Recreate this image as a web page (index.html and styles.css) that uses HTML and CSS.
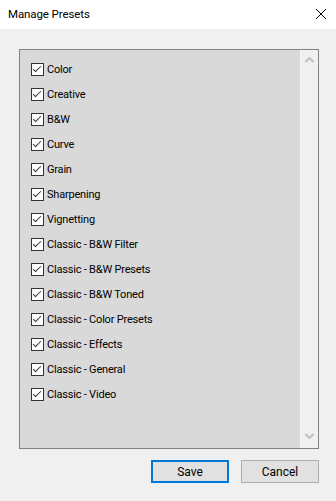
FILE: index.html
```html
<!DOCTYPE html>
<html lang="en">
<head>
    <meta charset="UTF-8">
    <meta name="viewport" content="width=device-width, initial-scale=1.0">
    <title>Manage Presets</title>
    <link rel="stylesheet" href="styles.css">
</head>
<body>
    <div class="dialog">
        <div class="title-bar">
            <div class="title-text">Manage Presets</div>
            <div class="close-button">
                <svg width="12" height="12" viewBox="0 0 12 12">
                    <path d="M1 1 L11 11 M11 1 L1 11" stroke="#000" stroke-width="1" fill="none"/>
                </svg>
            </div>
        </div>
        <div class="dialog-body">
            <div class="preset-box">
                <div class="preset-list">
                    <label class="preset-item"><span class="check-box"></span>Color</label>
                    <label class="preset-item"><span class="check-box"></span>Creative</label>
                    <label class="preset-item"><span class="check-box"></span>B&amp;W</label>
                    <label class="preset-item"><span class="check-box"></span>Curve</label>
                    <label class="preset-item"><span class="check-box"></span>Grain</label>
                    <label class="preset-item"><span class="check-box"></span>Sharpening</label>
                    <label class="preset-item"><span class="check-box"></span>Vignetting</label>
                    <label class="preset-item"><span class="check-box"></span>Classic - B&amp;W Filter</label>
                    <label class="preset-item"><span class="check-box"></span>Classic - B&amp;W Presets</label>
                    <label class="preset-item"><span class="check-box"></span>Classic - B&amp;W Toned</label>
                    <label class="preset-item"><span class="check-box"></span>Classic - Color Presets</label>
                    <label class="preset-item"><span class="check-box"></span>Classic - Effects</label>
                    <label class="preset-item"><span class="check-box"></span>Classic - General</label>
                    <label class="preset-item"><span class="check-box"></span>Classic - Video</label>
                </div>
                <div class="scroll-bar">
                    <svg class="scroll-arrow" width="9" height="6" viewBox="0 0 9 6">
                        <path d="M0.5 5 L4.5 1 L8.5 5" stroke="#bfbfbf" stroke-width="2" fill="none"/>
                    </svg>
                    <svg class="scroll-arrow" width="9" height="6" viewBox="0 0 9 6">
                        <path d="M0.5 1 L4.5 5 L8.5 1" stroke="#bfbfbf" stroke-width="2" fill="none"/>
                    </svg>
                </div>
            </div>
            <div class="button-row">
                <button class="dialog-button default-button">Save</button>
                <button class="dialog-button">Cancel</button>
            </div>
        </div>
    </div>
</body>
</html>
```

FILE: styles.css
```css
body {
    margin: 0;
    font-family: Roboto, "Noto Sans", sans-serif;
    font-size: 12px;
    color: #000;
    background-color: #f0f0f0;
}
.dialog {
    width: 336px;
    height: 501px;
    display: flex;
    flex-direction: column;
}
.title-bar {
    height: 29px;
    background: white;
    display: flex;
    align-items: center;
    justify-content: space-between;
    padding: 0 9px 0 8px;
    box-sizing: border-box;
}
.title-text {
    font-size: 11.5px;
    letter-spacing: -0.1px;
    margin-top: -1px;
}
.close-button {
    display: flex;
    margin-top: -2px;
}
.dialog-body {
    flex: 1;
    background-color: #f0f0f0;
    padding: 20px 17px 0 19px;
}
.preset-box {
    height: 400px;
    box-sizing: border-box;
    border: 1px solid #828282;
    display: flex;
}
.preset-list {
    flex: 1;
    background-color: #d9d9d9;
    padding: 7px 0 0 11px;
}
.preset-item {
    height: 25px;
    display: flex;
    align-items: center;
    font-size: 11px;
    letter-spacing: -0.2px;
}
.check-box {
    width: 13px;
    height: 13px;
    box-sizing: border-box;
    border: 1px solid #333;
    background: white;
    margin-right: 3px;
    position: relative;
}
.check-box::after {
    content: "";
    position: absolute;
    left: 3px;
    top: 0px;
    width: 3px;
    height: 7px;
    border-right: 1px solid #333;
    border-bottom: 1px solid #333;
    transform: rotate(45deg);
    transform-origin: center;
}
.scroll-bar {
    width: 17px;
    background-color: #f0f0f0;
    border-left: 1px solid #f8f8f8;
    display: flex;
    flex-direction: column;
    justify-content: space-between;
    align-items: center;
    padding: 7px 0 9px;
}
.button-row {
    display: flex;
    justify-content: flex-end;
    gap: 12px;
    margin-top: 11px;
}
.dialog-button {
    width: 78px;
    height: 23px;
    box-sizing: border-box;
    background-color: #e1e1e1;
    border: 1px solid #adadad;
    font-family: Roboto, "Noto Sans", sans-serif;
    font-size: 12px;
    color: #000;
    padding: 0;
}
.default-button {
    border: 2px solid #0078d7;
}
```
